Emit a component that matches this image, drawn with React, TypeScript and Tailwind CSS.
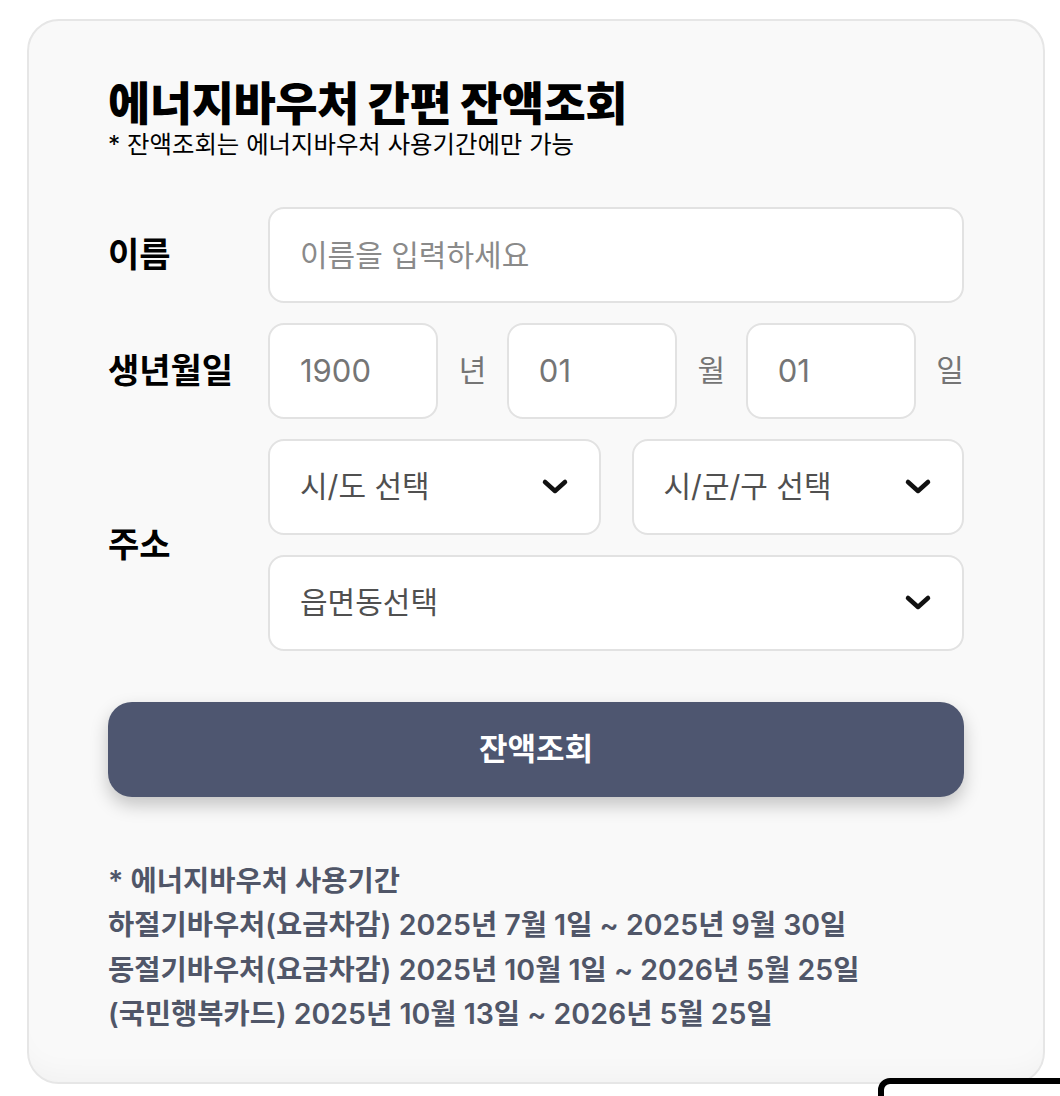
import React, { useState } from "react";

const font = "font-['Inter','Noto_Sans_CJK_KR',sans-serif]";

function Chevron() {
  return (
    <svg width="28" height="18" viewBox="0 0 28 18" className="shrink-0">
      <polyline
        points="4,4 14,13 24,4"
        fill="none"
        stroke="#111"
        strokeWidth="4.5"
        strokeLinecap="round"
        strokeLinejoin="round"
      />
    </svg>
  );
}

function Select({ label }: { label: string }) {
  return (
    <div className="flex h-[96px] items-center justify-between rounded-2xl border-2 border-[#e2e2e2] bg-white pl-[30px] pr-[30px]">
      <span className="text-[30px] text-[#505050]">{label}</span>
      <Chevron />
    </div>
  );
}

export default function App() {
  const [name, setName] = useState("");

  const box =
    "h-[96px] rounded-2xl border-2 border-[#e2e2e2] bg-white px-[30px] text-[#757575] placeholder:text-[#8a8a8a] outline-none";

  return (
    <div className={`relative min-h-screen overflow-hidden bg-white ${font}`}>
      <div className="ml-[27px] mt-[19px] w-[1018px] rounded-[32px] border-2 border-[#e6e6e6] bg-[#f9f9f9] px-[79px] pb-[45px] pt-[56px] shadow-[inset_0_-24px_30px_-20px_rgba(0,0,0,0.04)]">
        <h1 className="text-[46px] font-black leading-[1.15] tracking-[-0.5px] text-black">
          에너지바우처 간편 잔액조회
        </h1>
        <p className="text-[24.4px] leading-[1.22] text-black">* 잔액조회는 에너지바우처 사용기간에만 가능</p>

        <div className="mt-[47px] flex flex-col gap-[20px]">
          <div className="flex items-center">
            <label className="w-[160px] text-[34px] font-bold text-black">이름</label>
            <input
              className={`${box} flex-1 text-[30px]`}
              placeholder="이름을 입력하세요"
              value={name}
              onChange={(e) => setName(e.target.value)}
            />
          </div>

          <div className="flex items-center">
            <label className="w-[160px] text-[34px] font-bold text-black">생년월일</label>
            <div className="flex flex-1 items-center justify-between">
              <input className={`${box} w-[170px] text-[31px]`} defaultValue="1900" />
              <span className="text-[30px] text-[#757575]">년</span>
              <input className={`${box} w-[170px] text-[31px]`} defaultValue="01" />
              <span className="text-[30px] text-[#757575]">월</span>
              <input className={`${box} w-[170px] text-[31px]`} defaultValue="01" />
              <span className="text-[30px] text-[#757575]">일</span>
            </div>
          </div>

          <div className="flex items-center">
            <label className="w-[160px] text-[34px] font-bold text-black">주소</label>
            <div className="flex flex-1 flex-col gap-[20px]">
              <div className="grid grid-cols-2 gap-[31px]">
                <Select label="시/도 선택" />
                <Select label="시/군/구 선택" />
              </div>
              <Select label="읍면동선택" />
            </div>
          </div>
        </div>

        <button className="mt-[51px] flex h-[95px] w-full items-center justify-center rounded-[24px] bg-[#4e5670] text-[31px] font-bold text-white shadow-[0_8px_18px_rgba(0,0,0,0.22)]">
          잔액조회
        </button>

        <div className="mt-[62px] text-[28.5px] font-semibold leading-[44.5px] text-[#505668]">
          <p>* 에너지바우처 사용기간</p>
          <p>하절기바우처(요금차감) 2025년 7월 1일 ~ 2025년 9월 30일</p>
          <p>동절기바우처(요금차감) 2025년 10월 1일 ~ 2026년 5월 25일</p>
          <p>(국민행복카드) 2025년 10월 13일 ~ 2026년 5월 25일</p>
        </div>
      </div>

      <div className="absolute left-[878px] top-[1078px] h-[100px] w-[220px] rounded-xl border-[6px] border-black bg-white" />
    </div>
  );
}
